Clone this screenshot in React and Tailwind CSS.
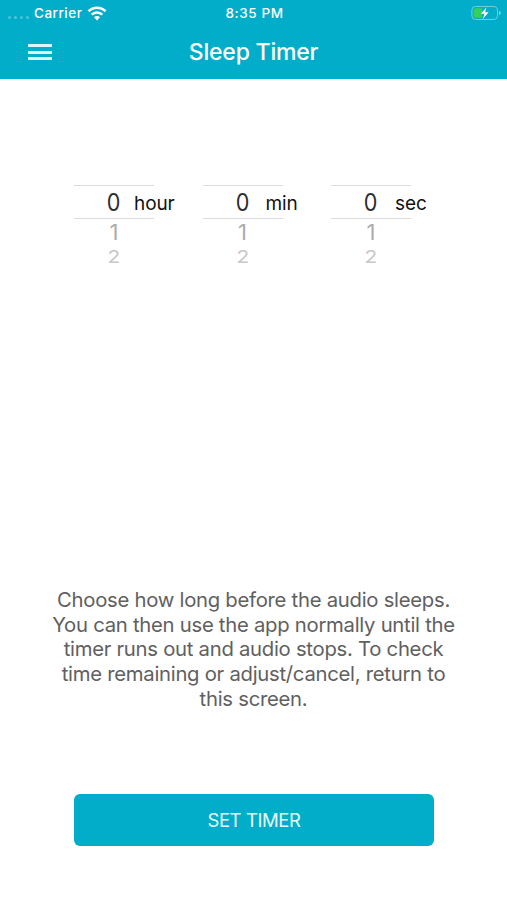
import { useState } from "react";

const WHEELS = [
  { unit: "hour", labelClass: "left-[60px]" },
  { unit: "min", labelClass: "left-[63px]" },
  { unit: "sec", labelClass: "left-[64px]" },
];

function WifiIcon() {
  return (
    <svg width="20" height="15" viewBox="0 0 20 15" className="ml-[5px]" fill="none">
      <path d="M1.5 5.3a12 12 0 0 1 17 0" stroke="white" strokeWidth="2.7" />
      <path d="M4.7 8.7a7.5 7.5 0 0 1 10.6 0" stroke="white" strokeWidth="2.5" />
      <path d="M10 14.4l-3-3.1a4.200 4.200 0 0 1 6 0z" fill="white" />
    </svg>
  );
}

function BatteryIcon() {
  return (
    <svg width="30" height="16" viewBox="0 0 30 16" fill="none">
      <rect x="0.9" y="1.5" width="25.6" height="13" rx="3.6" stroke="#6bd0e0" strokeWidth="1" />
      <path d="M28 5.8c1.4.6 1.9 1.3 1.9 2.2s-.5 1.6-1.9 2.2z" fill="#6bd0e0" />
      <path d="M4.6 3.2h6.4v9.600H4.600a2 2 0 0 1-2-2V5.200a2 2 0 0 1 2-2z" fill="#32d158" />
      <path d="M15.5 2.2L9.9 8.8h3.5l-1.5 5.2 5.7-6.800h-3.500z" fill="white" />
    </svg>
  );
}

function Wheel({ unit, labelClass, value, onChange }) {
  return (
    <div className="relative w-20 text-center text-[#2e2e2e]">
      <div className="flex h-[34px] items-center justify-center border-y border-[#dcdcdc] pt-[2px]">
        <span className="scale-x-90 text-[24px] leading-none">{value}</span>
      </div>
      <button
        type="button"
        onClick={() => onChange(value + 1)}
        className="block h-[26px] w-full scale-y-[0.98] text-[22px] leading-[26px] text-[#acacac]"
      >
        {value + 1}
      </button>
      <button
        type="button"
        onClick={() => onChange(value + 2)}
        className="block h-[24px] w-full scale-x-95 scale-y-[0.79] text-[22px] leading-[24px] text-[#c8c8c8]"
      >
        {value + 2}
      </button>
      <span className={`absolute top-[7px] text-[19px] leading-6 tracking-[-0.1px] text-[#111111] ${labelClass}`}>
        {unit}
      </span>
    </div>
  );
}

export default function App() {
  const [time, setTime] = useState({ hour: 0, min: 0, sec: 0 });

  return (
    <div className="flex h-[900px] w-[507px] flex-col overflow-hidden bg-white font-['Inter',sans-serif]">
      {/* Header */}
      <header className="h-[79px] bg-[#02adc9] text-white">
        <div className="grid h-[26px] grid-cols-3 items-center pr-[6px] pl-[8px] text-[13.5px] font-medium">
          <div className="flex items-center">
            <div className="mt-[8px] flex gap-[3px]">
              {[0, 1, 2, 3].map((dot) => (
                <span key={dot} className="h-[3px] w-[3px] rounded-full bg-[#4cc5d9]" />
              ))}
            </div>
            <span className="ml-[5px] pt-px tracking-[0.5px]">Carrier</span>
            <WifiIcon />
          </div>
          <span className="pt-px text-center tracking-[0.6px]">8:35 PM</span>
          <div className="flex justify-end">
            <BatteryIcon />
          </div>
        </div>

        <div className="grid h-[52px] grid-cols-[100px_1fr_100px] items-center">
          <button type="button" aria-label="Menu" className="ml-[28px] flex w-[24px] flex-col gap-[3.5px]">
            <span className="h-[3px] bg-[#d9f6fa]" />
            <span className="h-[3px] bg-[#d9f6fa]" />
            <span className="h-[3px] bg-[#d9f6fa]" />
          </button>
          <h1 className="text-center text-[23px] font-medium tracking-[-0.2px]">Sleep Timer</h1>
        </div>
      </header>

      {/* Picker */}
      <section className="mt-[106px] ml-[74px] flex h-[340px] gap-[48.5px]">
        {WHEELS.map(({ unit, labelClass }) => (
          <Wheel
            key={unit}
            unit={unit}
            labelClass={labelClass}
            value={time[unit]}
            onChange={(value) => setTime((prev) => ({ ...prev, [unit]: value }))}
          />
        ))}
      </section>

      <p className="mt-[63px] text-center text-[20.3px] leading-[24.7px] tracking-[-0.27px] text-[#606060]">
        Choose how long before the audio sleeps.
        <br />
        You can then use the app normally until the
        <br />
        timer runs out and audio stops. To check
        <br />
        time remaining or adjust/cancel, return to
        <br />
        this screen.
      </p>

      <button
        type="button"
        onClick={() => setTime({ hour: 0, min: 0, sec: 0 })}
        className="mt-[82px] ml-[74px] h-[52px] w-[360px] rounded-[6px] bg-[#02adc9] pt-[2px] text-[18.5px] tracking-[-0.4px] text-[#e9fbfd]"
      >
        SET TIMER
      </button>
    </div>
  );
}
